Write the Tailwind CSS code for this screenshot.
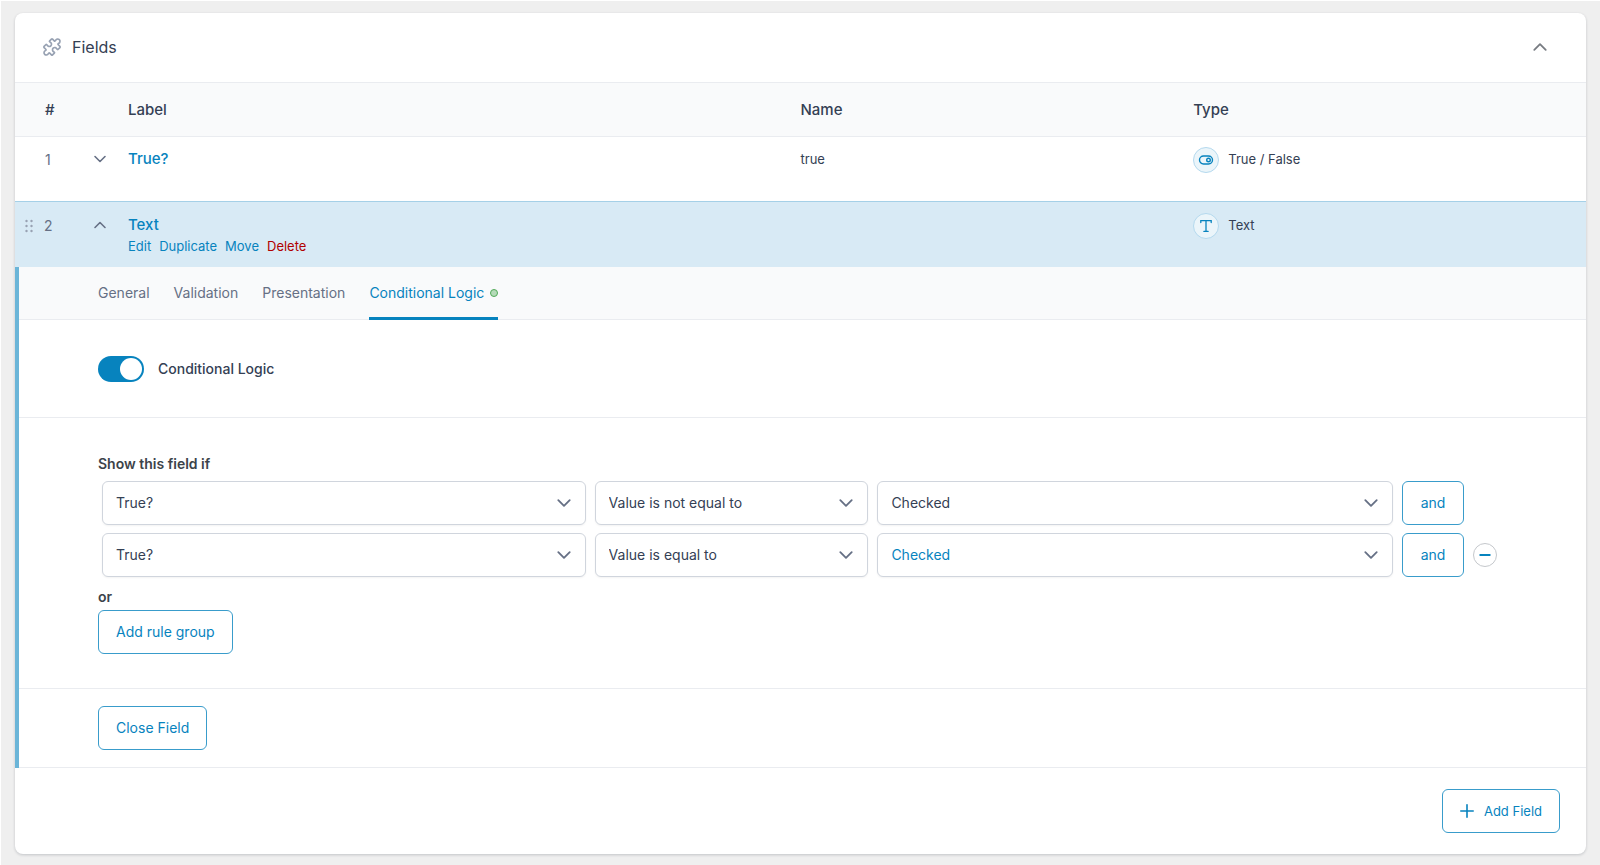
<!DOCTYPE html>
<html lang="en">
    <head>
        <meta charset="UTF-8" />
        <meta name="viewport" content="width=device-width, initial-scale=1.0" />
        <title>Fields</title>
        <script src="https://cdn.jsdelivr.net/npm/@tailwindcss/browser@4"></script>
    </head>
    <body class="min-h-screen bg-[#efefef] border-t border-l border-white pt-3 pl-[14px] pr-[14px] pb-[11px] font-[Inter,'Liberation_Sans',sans-serif] text-sm text-[#344054]">
        <!-- Chevron shared by the rows and the selects -->
        <svg class="hidden">
            <symbol id="chevron" viewBox="0 0 14 14">
                <path d="M2 4.5l5 5 5-5" fill="none" stroke="currentColor" stroke-width="1.6" stroke-linecap="round" stroke-linejoin="round" />
            </symbol>
        </svg>

        <main class="bg-white rounded-lg shadow-[0_1px_3px_rgba(16,24,40,0.2)] overflow-hidden">
            <!-- Header -->
            <div class="h-[70px] flex items-center justify-between pl-[25px] pr-[38px] pb-[2px] border-b border-[#eaecf0]">
                <h2 class="flex items-center gap-2 text-base">
                    <svg class="size-6 text-[#98a2b3]" viewBox="0 0 24 24" fill="none" stroke="currentColor" stroke-width="1.7" stroke-linejoin="round">
                        <path transform="rotate(45 12 12)" d="M6.8 6h2.4c.7 0 .9-.5.7-1.1a2.3 2.3 0 1 1 4.2 0c-.2.6 0 1.1.7 1.1h2.4c.5 0 .8.3.8.8v2.4c0 .7-.5.9-1.1.7a2.3 2.3 0 1 0 0 4.2c.6-.2 1.1 0 1.1.7v2.4c0 .5-.3.8-.8.8h-2.4c-.7 0-.9.5-.7 1.1a2.3 2.3 0 1 1-4.2 0c.2-.6 0-1.1-.7-1.1H6.8c-.5 0-.8-.3-.8-.8v-2.4c0-.7.5-.9 1.1-.7a2.3 2.3 0 1 0 0-4.2c-.6.2-1.1 0-1.1-.7V6.8c0-.5.3-.8.8-.8z" />
                    </svg>
                    Fields
                </h2>
                <button type="button" aria-label="Collapse" class="text-[#787c82]">
                    <svg class="size-4 rotate-180"><use href="#chevron" /></svg>
                </button>
            </div>

            <!-- Field list -->
            <table class="w-full table-fixed text-left">
                <colgroup>
                    <col class="w-[72px]" />
                    <col class="w-[41px]" />
                    <col />
                    <col class="w-1/4" />
                    <col class="w-1/4" />
                </colgroup>
                <thead>
                    <tr class="h-[53px] bg-[#f9fafb] border-b border-[#eaecf0] text-[15px]">
                        <th class="pl-[30px] font-medium">#</th>
                        <td></td>
                        <th class="font-medium">Label</th>
                        <th class="font-medium">Name</th>
                        <th class="font-medium">Type</th>
                    </tr>
                </thead>
                <tbody>
                    <tr class="h-[65px] align-top">
                        <td class="pl-[30px] pt-[11px] leading-6 text-[#667085]">1</td>
                        <td class="pt-[15px] text-[#667085]">
                            <button type="button" aria-label="Open field" class="block pl-[6px]"><svg class="size-[14px]"><use href="#chevron" /></svg></button>
                        </td>
                        <td class="pt-[10px]"><a href="#" class="text-[15px] leading-6 font-medium text-[#0783be]">True?</a></td>
                        <td class="pt-[10px] leading-6 text-[13px]">true</td>
                        <td class="pt-[10px] text-[13px]">
                            <span class="flex items-center gap-[9px]">
                                <span class="size-[26px] rounded-full border border-[#b4d9ee] bg-[#ebf5fa] flex items-center justify-center text-[#0783be]">
                                    <svg class="w-4 h-3" viewBox="0 0 16 12" fill="none" stroke="currentColor" stroke-width="1.4">
                                        <rect x="1.5" y="2" width="13" height="8" rx="4" />
                                        <circle cx="10.5" cy="6" r="1.8" />
                                    </svg>
                                </span>
                                True / False
                            </span>
                        </td>
                    </tr>
                    <tr class="h-[66px] align-top bg-[#d8eaf5] border-t border-[#a5d0e7]">
                        <td class="pt-3 leading-6 text-[#667085]">
                            <span class="flex items-center gap-[11px] pl-[10px]">
                                <svg class="w-2 h-[14px] text-[#98a2b3]" viewBox="0 0 8 14" fill="currentColor">
                                    <circle cx="1.5" cy="2" r="1.2" /><circle cx="6.5" cy="2" r="1.2" />
                                    <circle cx="1.5" cy="7" r="1.2" /><circle cx="6.5" cy="7" r="1.2" />
                                    <circle cx="1.5" cy="12" r="1.2" /><circle cx="6.5" cy="12" r="1.2" />
                                </svg>
                                2
                            </span>
                        </td>
                        <td class="pt-4 text-[#667085]">
                            <button type="button" aria-label="Close field" class="block pl-[6px]"><svg class="size-[14px] rotate-180"><use href="#chevron" /></svg></button>
                        </td>
                        <td class="pt-[11px]">
                            <a href="#" class="block w-fit text-[15px] leading-6 font-medium text-[#0783be]">Text</a>
                            <div class="flex gap-2 text-[13px] leading-[18px] text-[#0783be]">
                                <a href="#">Edit</a>
                                <a href="#">Duplicate</a>
                                <a href="#">Move</a>
                                <a href="#" class="text-[#b10000]">Delete</a>
                            </div>
                        </td>
                        <td></td>
                        <td class="pt-[11px] text-[13px]">
                            <span class="flex items-center gap-[9px]">
                                <span class="size-[26px] rounded-full border border-[#b4d9ee] bg-[#ebf5fa] flex items-center justify-center text-[#0783be]">
                                    <svg class="size-[14px]" viewBox="0 0 14 14" fill="none" stroke="currentColor" stroke-width="1.3" stroke-linecap="round">
                                        <path d="M1.8 3.6V1.6h10.4v2M7 1.6v10.8M4.9 12.4h4.2" />
                                    </svg>
                                </span>
                                Text
                            </span>
                        </td>
                    </tr>
                </tbody>
            </table>

            <!-- Field settings -->
            <section class="border-l-4 border-[#6bb5d8]">
                <nav class="flex gap-6 h-[53px] pl-[79px] bg-[#f9fafb] border-b border-[#eaecf0] text-[#667085]">
                    <a href="#" class="flex items-center">General</a>
                    <a href="#" class="flex items-center">Validation</a>
                    <a href="#" class="flex items-center">Presentation</a>
                    <a href="#" class="flex items-center gap-[6px] -mb-px border-b-3 pt-[2px] border-[#0783be] text-[#0783be]">
                        Conditional Logic
                        <span class="size-2 rounded-full border border-[#52aa59] bg-[#b5dab8]"></span>
                    </a>
                </nav>

                <div class="h-[98px] flex items-center pl-[79px] border-b border-[#eaecf0]">
                    <label class="flex items-center gap-[14px] font-medium">
                        <input type="checkbox" checked class="appearance-none w-[46px] h-[26px] rounded-full bg-[#0783be] flex items-center justify-end px-[2px] before:size-[22px] before:rounded-full before:bg-white" />
                        Conditional Logic
                    </label>
                </div>

                <div class="pl-[79px] pr-[89px] pt-9 pb-[34px] border-b border-[#eaecf0]">
                    <h3 class="leading-5 font-semibold text-[#3c434a]">Show this field if</h3>
                    <div class="grid grid-cols-[484fr_274fr_516fr_62px_24px] items-center gap-x-[9px] gap-y-2 pt-[7px] pl-1">
                        <div class="relative">
                            <select aria-label="Field" class="appearance-none block w-full h-11 px-[13px] rounded-md border border-[#d0d5dd] bg-white shadow-xs"><option>True?</option></select>
                            <svg class="absolute right-[14px] top-[14px] size-4 text-[#667085] pointer-events-none"><use href="#chevron" /></svg>
                        </div>
                        <div class="relative">
                            <select aria-label="Operator" class="appearance-none block w-full h-11 px-[13px] rounded-md border border-[#d0d5dd] bg-white shadow-xs"><option>Value is not equal to</option></select>
                            <svg class="absolute right-[14px] top-[14px] size-4 text-[#667085] pointer-events-none"><use href="#chevron" /></svg>
                        </div>
                        <div class="relative">
                            <select aria-label="Value" class="appearance-none block w-full h-11 px-[13px] rounded-md border border-[#d0d5dd] bg-white shadow-xs"><option>Checked</option></select>
                            <svg class="absolute right-[14px] top-[14px] size-4 text-[#667085] pointer-events-none"><use href="#chevron" /></svg>
                        </div>
                        <button type="button" class="h-11 rounded-md border border-[#399ccb] text-[#0783be]">and</button>
                        <span></span>

                        <div class="relative">
                            <select aria-label="Field" class="appearance-none block w-full h-11 px-[13px] rounded-md border border-[#d0d5dd] bg-white shadow-xs"><option>True?</option></select>
                            <svg class="absolute right-[14px] top-[14px] size-4 text-[#667085] pointer-events-none"><use href="#chevron" /></svg>
                        </div>
                        <div class="relative">
                            <select aria-label="Operator" class="appearance-none block w-full h-11 px-[13px] rounded-md border border-[#d0d5dd] bg-white shadow-xs"><option>Value is equal to</option></select>
                            <svg class="absolute right-[14px] top-[14px] size-4 text-[#667085] pointer-events-none"><use href="#chevron" /></svg>
                        </div>
                        <div class="relative">
                            <select aria-label="Value" class="appearance-none block w-full h-11 px-[13px] rounded-md border border-[#d0d5dd] bg-white shadow-xs text-[#0783be]"><option>Checked</option></select>
                            <svg class="absolute right-[14px] top-[14px] size-4 text-[#667085] pointer-events-none"><use href="#chevron" /></svg>
                        </div>
                        <button type="button" class="h-11 rounded-md border border-[#399ccb] text-[#0783be]">and</button>
                        <button type="button" aria-label="Remove rule" class="size-6 rounded-full border border-[#c5c8cc] flex items-center justify-center text-[#0783be]">
                            <svg class="size-3" viewBox="0 0 12 12"><path d="M1.2 6h9.6" stroke="currentColor" stroke-width="1.8" stroke-linecap="round" /></svg>
                        </button>
                    </div>
                    <h3 class="pt-[10px] pb-[3px] leading-5 font-semibold text-[#3c434a]">or</h3>
                    <button type="button" class="h-11 px-[17px] rounded-md border border-[#399ccb] text-[#0783be]">Add rule group</button>
                </div>

                <div class="pl-[79px] py-[17px] border-b border-[#eaecf0]">
                    <button type="button" class="block h-11 px-[17px] rounded-md border border-[#399ccb] text-[#0783be]">Close Field</button>
                </div>
            </section>

            <!-- Footer -->
            <div class="flex justify-end px-[26px] py-[21px]">
                <button type="button" class="flex items-center gap-[10px] h-11 px-[17px] rounded-md border border-[#399ccb] text-[13px] text-[#0783be]">
                    <svg class="size-[14px]" viewBox="0 0 14 14"><path d="M.8 7h12.4M7 .8v12.4" stroke="currentColor" stroke-width="1.6" stroke-linecap="round" /></svg>
                    Add Field
                </button>
            </div>
        </main>
    </body>
</html>
